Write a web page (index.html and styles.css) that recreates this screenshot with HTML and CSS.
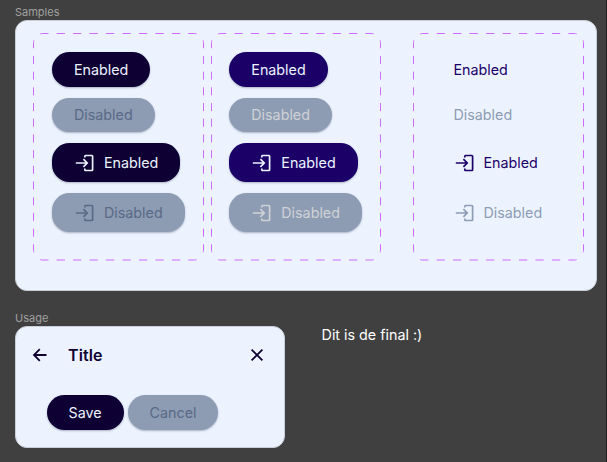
FILE: index.html
```
<!DOCTYPE html>
<html lang="en">
<head>
<meta charset="utf-8">
<title>Button samples</title>
<link rel="stylesheet" href="styles.css">
</head>
<body>
<svg class="defs" width="0" height="0" aria-hidden="true">
  <symbol id="enter" viewBox="0 0 20 20">
    <path d="M1.300 10h11.200M8.900 6.200l3.800 3.800-3.800 3.800M10.300 4.500V3.300q0-.8.8-.8h6.200q.8 0 .8.800v13.400q0 .8-.8.800h-6.200q-.8 0-.8-.8v-1.200"/>
  </symbol>
  <symbol id="outline" viewBox="0 0 171 228" preserveAspectRatio="none">
    <path class="h" d="M7.200 1q1-.5 2-.5H161.800q1 0 2 .5"/>
    <path class="h" d="M7.200 226.500q1 .5 2 .5H161.800q1 0 2-.5"/>
    <path class="v" d="M1 7.300q-.5 1-.5 2V217.300q0 1 .5 2"/>
    <path class="v" d="M170 7.300q.5 1 .5 2V217.300q0 1-.5 2"/>
  </symbol>
</svg>
<main class="canvas">
  <h2 class="label">Samples</h2>
  <section class="panel samples">
    <div class="set">
      <svg class="outline"><use href="#outline"/></svg>
      <button class="btn primary">Enabled</button>
      <button class="btn off">Disabled</button>
      <button class="btn primary with-icon"><svg class="icon"><use href="#enter"/></svg>Enabled</button>
      <button class="btn off with-icon"><svg class="icon"><use href="#enter"/></svg>Disabled</button>
    </div>
    <div class="set">
      <svg class="outline"><use href="#outline"/></svg>
      <button class="btn secondary">Enabled</button>
      <button class="btn off light">Disabled</button>
      <button class="btn secondary with-icon"><svg class="icon"><use href="#enter"/></svg>Enabled</button>
      <button class="btn off light with-icon"><svg class="icon"><use href="#enter"/></svg>Disabled</button>
    </div>
    <div class="set text-set">
      <svg class="outline"><use href="#outline"/></svg>
      <button class="btn text">Enabled</button>
      <button class="btn text text-off">Disabled</button>
      <button class="btn text with-icon"><svg class="icon"><use href="#enter"/></svg>Enabled</button>
      <button class="btn text text-off with-icon"><svg class="icon"><use href="#enter"/></svg>Disabled</button>
    </div>
  </section>
  <h2 class="label usage-label">Usage</h2>
  <div class="bottom">
    <section class="panel usage">
      <header class="bar">
        <svg class="nav" viewBox="0 0 16 16"><path d="M14.500 8H2M7.800 2.200L2 8l5.800 5.800"/></svg>
        <h1 class="title">Title</h1>
        <svg class="nav" viewBox="0 0 16 16"><path d="M2.600 2.600l10.800 10.800M13.400 2.600L2.600 13.400"/></svg>
      </header>
      <div class="actions">
        <button class="btn primary">Save</button>
        <button class="btn off">Cancel</button>
      </div>
    </section>
    <p class="note">Dit is de final :)</p>
  </div>
</main>
</body>
</html>
```

FILE: styles.css
```
* { box-sizing: border-box; }
body {
  margin: 0;
  background: #404040;
  font-family: Inter, "Liberation Sans", sans-serif;
}
.defs { display: block; }
.canvas {
  height: 462px;
  padding: 5px 9px 0 15px;
  border-right: 1px solid #202020;
  overflow: hidden;
}
.label {
  margin: 0;
  height: 15px;
  font-size: 11px;
  line-height: 15px;
  font-weight: 400;
  color: #a0a0a0;
}
.panel {
  background: #ecf3ff;
  border: 1px solid #c9cfda;
  border-radius: 12px;
}
.samples {
  display: flex;
  height: 271px;
  padding: 12px 17px;
}
.set {
  position: relative;
  display: flex;
  flex: none;
  flex-direction: column;
  align-items: flex-start;
  gap: 10.700px;
  width: 171px;
  height: 228px;
  margin-right: 7px;
  padding: 19.200px 0 0 19px;
}
.set + .set { width: 170px; margin-right: 32px; padding-left: 18.300px; }
.set.text-set { width: 171px; margin: 0; padding-left: 18.500px; }
.outline {
  position: absolute;
  inset: 0;
  width: 100%;
  height: 100%;
  fill: none;
  stroke: #cd6bff;
  stroke-width: 1;
}
.h { stroke-dasharray: 8.300 8.170; }
.v { stroke-dasharray: 8 7.700; }
.btn {
  display: flex;
  align-items: center;
  height: 34.800px;
  margin: 0;
  padding: 0 22px;
  border: 0;
  border-radius: 17.500px;
  font: 400 14.300px/20px Inter, "Liberation Sans", sans-serif;
  white-space: nowrap;
  box-shadow: 0 1px 2px rgba(20, 30, 60, .3);
}
.with-icon { height: 39.300px; gap: 9px; }
.icon {
  width: 21px;
  height: 20px;
  fill: none;
  stroke: currentColor;
  stroke-width: 1.700;
}
.primary { background: #0f0034; color: #ecf3ff; }
.secondary { background: #1b0068; color: #ecf3ff; }
.off { background: #8d9cb3; color: #596986; }
.off.light { color: #ced2d6; }
.text { background: none; box-shadow: none; color: #1b0068; }
.text-off { color: #8d9cb3; }
.usage-label { margin-top: 20px; }
.bottom { display: flex; }
.usage { width: 270px; height: 122px; }
.bar {
  display: flex;
  align-items: center;
  height: 55px;
  padding: 0 19px 0 16px;
  color: #0f0034;
}
.nav {
  width: 16px;
  height: 16px;
  fill: none;
  stroke: currentColor;
  stroke-width: 1.800;
}
.title {
  flex: 1;
  margin: 0 0 0 20px;
  font-size: 16px;
  line-height: 22px;
  font-weight: 600;
  letter-spacing: .1px;
}
.actions { display: flex; gap: 4px; padding: 13.300px 0 0 30.500px; }
.note {
  margin: 0 0 0 36.600px;
  font-size: 14.300px;
  line-height: 18px;
  color: #fff;
}
```
